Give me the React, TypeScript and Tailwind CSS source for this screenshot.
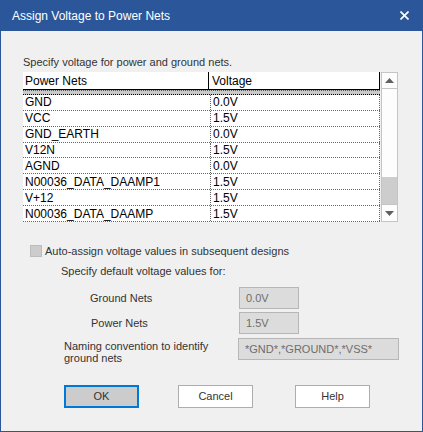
import React from "react";

const nets = [
  { name: "GND", voltage: "0.0V" },
  { name: "VCC", voltage: "1.5V" },
  { name: "GND_EARTH", voltage: "0.0V" },
  { name: "V12N", voltage: "1.5V" },
  { name: "AGND", voltage: "0.0V" },
  { name: "N00036_DATA_DAAMP1", voltage: "1.5V" },
  { name: "V+12", voltage: "1.5V" },
  { name: "N00036_DATA_DAAMP", voltage: "1.5V" },
];

const ui = { fontFamily: '"Liberation Sans", Arial, sans-serif' };

const Arrow = ({ up }: { up?: boolean }) => (
  <svg width="9" height="5" viewBox="0 0 9 5">
    <path d={up ? "M0 5 L4.5 0 L9 5 Z" : "M0 0 L4.5 5 L9 0 Z"} fill="#606060" />
  </svg>
);

const NetGrid: React.FC = () => (
  <div className="flex h-[150px] gap-[1px]">
    <div className="flex w-[357px] flex-col bg-white text-[12px] text-black" style={ui}>
      <div className="flex h-[18px] border-b border-black">
        <div className="flex w-[186px] items-center border-r border-black pl-[2px]">Power Nets</div>
        <div className="flex flex-1 items-center border-r border-black pl-[3px]">Voltage</div>
      </div>
      <div className="h-[5px] border-t border-dotted border-[#555] bg-[#c8c8c8] border-b border-b-black border-b-solid" />
      {nets.map((net) => (
        <div key={net.name} className="flex h-[16px] border-b border-dotted border-[#666]">
          <div className="flex w-[187px] items-center pl-[2px] leading-none">{net.name}</div>
          <div className="flex flex-1 items-center border-l border-r border-dotted border-[#666] pl-[2px] leading-none">
            {net.voltage}
          </div>
        </div>
      ))}
    </div>
    <div className="flex w-[17px] flex-col border border-[#c4c4c4] bg-[#fdfdfd]">
      <div className="flex h-[16px] items-center justify-center border-b border-[#c4c4c4]">
        <Arrow up />
      </div>
      <div className="h-[88px]" />
      <div className="h-[27px] bg-[#cdcdcd]" />
      <div className="flex flex-1 items-center justify-center border-t border-[#c4c4c4]">
        <Arrow />
      </div>
    </div>
  </div>
);

const Field = ({ value, width }: { value: string; width: string }) => (
  <div
    className={`flex h-[22px] shrink-0 items-center border border-[#b6b6b6] bg-[#dcdcdc] pl-[6px] text-[11px] text-[#6d6d6d] ${width}`}
  >
    {value}
  </div>
);

const DialogButton = ({ label, primary }: { label: string; primary?: boolean }) => (
  <button
    className={
      primary
        ? "flex h-[23px] w-[75px] items-center justify-center border-2 border-[#0078d7] bg-[#cccccc] text-[11px] text-[#333]"
        : "flex h-[23px] w-[75px] items-center justify-center border border-[#adadad] bg-white text-[11px] text-[#333]"
    }
    style={ui}
  >
    {label}
  </button>
);

export default function App() {
  return (
    <div className="flex h-[432px] w-[423px] flex-col border border-t-0 border-[#2b579a] bg-[#f0f0f0]" style={ui}>
      <div className="-mx-[1px] flex h-[31px] items-center justify-between bg-[#2b579a] pl-[12px] pr-[14px] text-[12px] text-white">
        <span>Assign Voltage to Power Nets</span>
        <svg width="9" height="9" viewBox="0 0 9 9">
          <path d="M0.5 0.5 L8.5 8.5 M8.5 0.5 L0.5 8.5" stroke="white" strokeWidth="1.6" />
        </svg>
      </div>

      <div className="flex flex-col pl-[22px] text-[11px] text-[#333]">
        <div className="mt-[23px] h-[16px] leading-[16px]">Specify voltage for power and ground nets.</div>
        <div className="mt-[2px]">
          <NetGrid />
        </div>

        <div className="mt-[21px] flex items-center gap-[2px] pl-[7px]">
          <div className="h-[12px] w-[12px] border border-[#bcbcbc] bg-[#cccccc]" />
          <span className="ml-[1px] leading-[16px]">Auto-assign voltage values in subsequent designs</span>
        </div>

        <div className="mt-[4px] pl-[38px] leading-[16px]">Specify default voltage values for:</div>

        <div className="mt-[8px] flex items-center">
          <span className="w-[216px] pl-[67px]">Ground Nets</span>
          <Field value="0.0V" width="w-[60px]" />
        </div>
        <div className="mt-[3px] flex items-center">
          <span className="w-[216px] pl-[68px]">Power Nets</span>
          <Field value="1.5V" width="w-[60px]" />
        </div>
        <div className="mt-[4px] flex h-[22px] items-start">
          <span className="w-[215px] pl-[41px] pt-[2px] leading-[12px]">
            Naming convention to identify
            <br />
            ground nets
          </span>
          <Field value="*GND*,*GROUND*,*VSS*" width="w-[161px]" />
        </div>

        <div className="mt-[25px] flex pl-[41px]">
          <DialogButton label="OK" primary />
          <div className="ml-[39px]">
            <DialogButton label="Cancel" />
          </div>
          <div className="ml-[42px]">
            <DialogButton label="Help" />
          </div>
        </div>
      </div>
    </div>
  );
}
